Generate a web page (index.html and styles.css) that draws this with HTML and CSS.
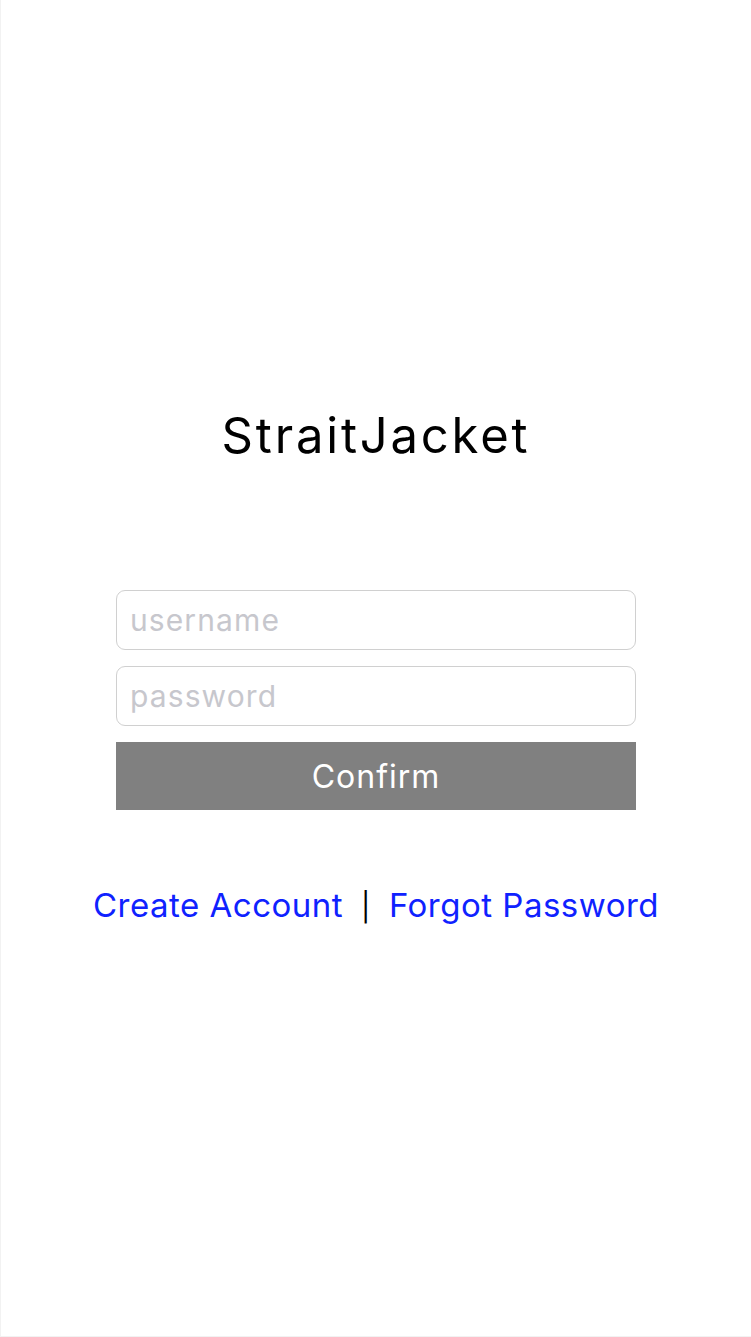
FILE: index.html
```html
<!DOCTYPE html>
<html>
<head>
<meta charset="utf-8">
<link rel="stylesheet" href="styles.css">
</head>
<body>
<div class="screen">
  <h1 class="title">StraitJacket</h1>
  <form class="form">
    <input class="field" type="text" placeholder="username">
    <input class="field" type="password" placeholder="password">
    <button class="confirm" type="button">Confirm</button>
  </form>
  <div class="links">
    <a class="link" href="#">Create Account</a>
    <span class="sep">|</span>
    <a class="link" href="#">Forgot Password</a>
  </div>
</div>
</body>
</html>
```

FILE: styles.css
```css
html, body {
  margin: 0;
  padding: 0;
  background: #fff;
}
.screen {
  box-sizing: border-box;
  width: 751px;
  height: 1337px;
  border-left: 1px solid #f2f2f2;
  border-bottom: 1px solid #f2f2f2;
  display: flex;
  flex-direction: column;
  align-items: center;
  font-family: Inter, "Noto Sans", sans-serif;
}
.title {
  margin: 396px 0 0 0;
  font-size: 49px;
  font-weight: 400;
  line-height: 80px;
  letter-spacing: 2.8px;
  color: #000;
}
.form {
  margin-top: 114px;
  display: flex;
  flex-direction: column;
  gap: 16px;
  width: 520px;
}
.field {
  box-sizing: border-box;
  height: 60px;
  width: 520px;
  margin: 0;
  border: 1.5px solid #d0d0d0;
  border-radius: 9px;
  padding: 0 13px;
  font-family: inherit;
  font-size: 30px;
  letter-spacing: 1.1px;
  color: #000;
  outline: none;
}
.field::placeholder {
  color: #c7c7cd;
}
.confirm {
  height: 68px;
  width: 520px;
  border: 0;
  margin: 0;
  background: #808080;
  color: #fff;
  font-family: inherit;
  font-size: 32px;
  letter-spacing: 1px;
}
.links {
  margin-top: 70px;
  display: flex;
  align-items: baseline;
  gap: 18px;
  font-size: 33px;
  line-height: 50px;
  letter-spacing: 0.5px;
}
.link {
  color: #0f22ff;
  text-decoration: none;
}
.sep {
  color: #000;
  font-size: 28px;
}
```
